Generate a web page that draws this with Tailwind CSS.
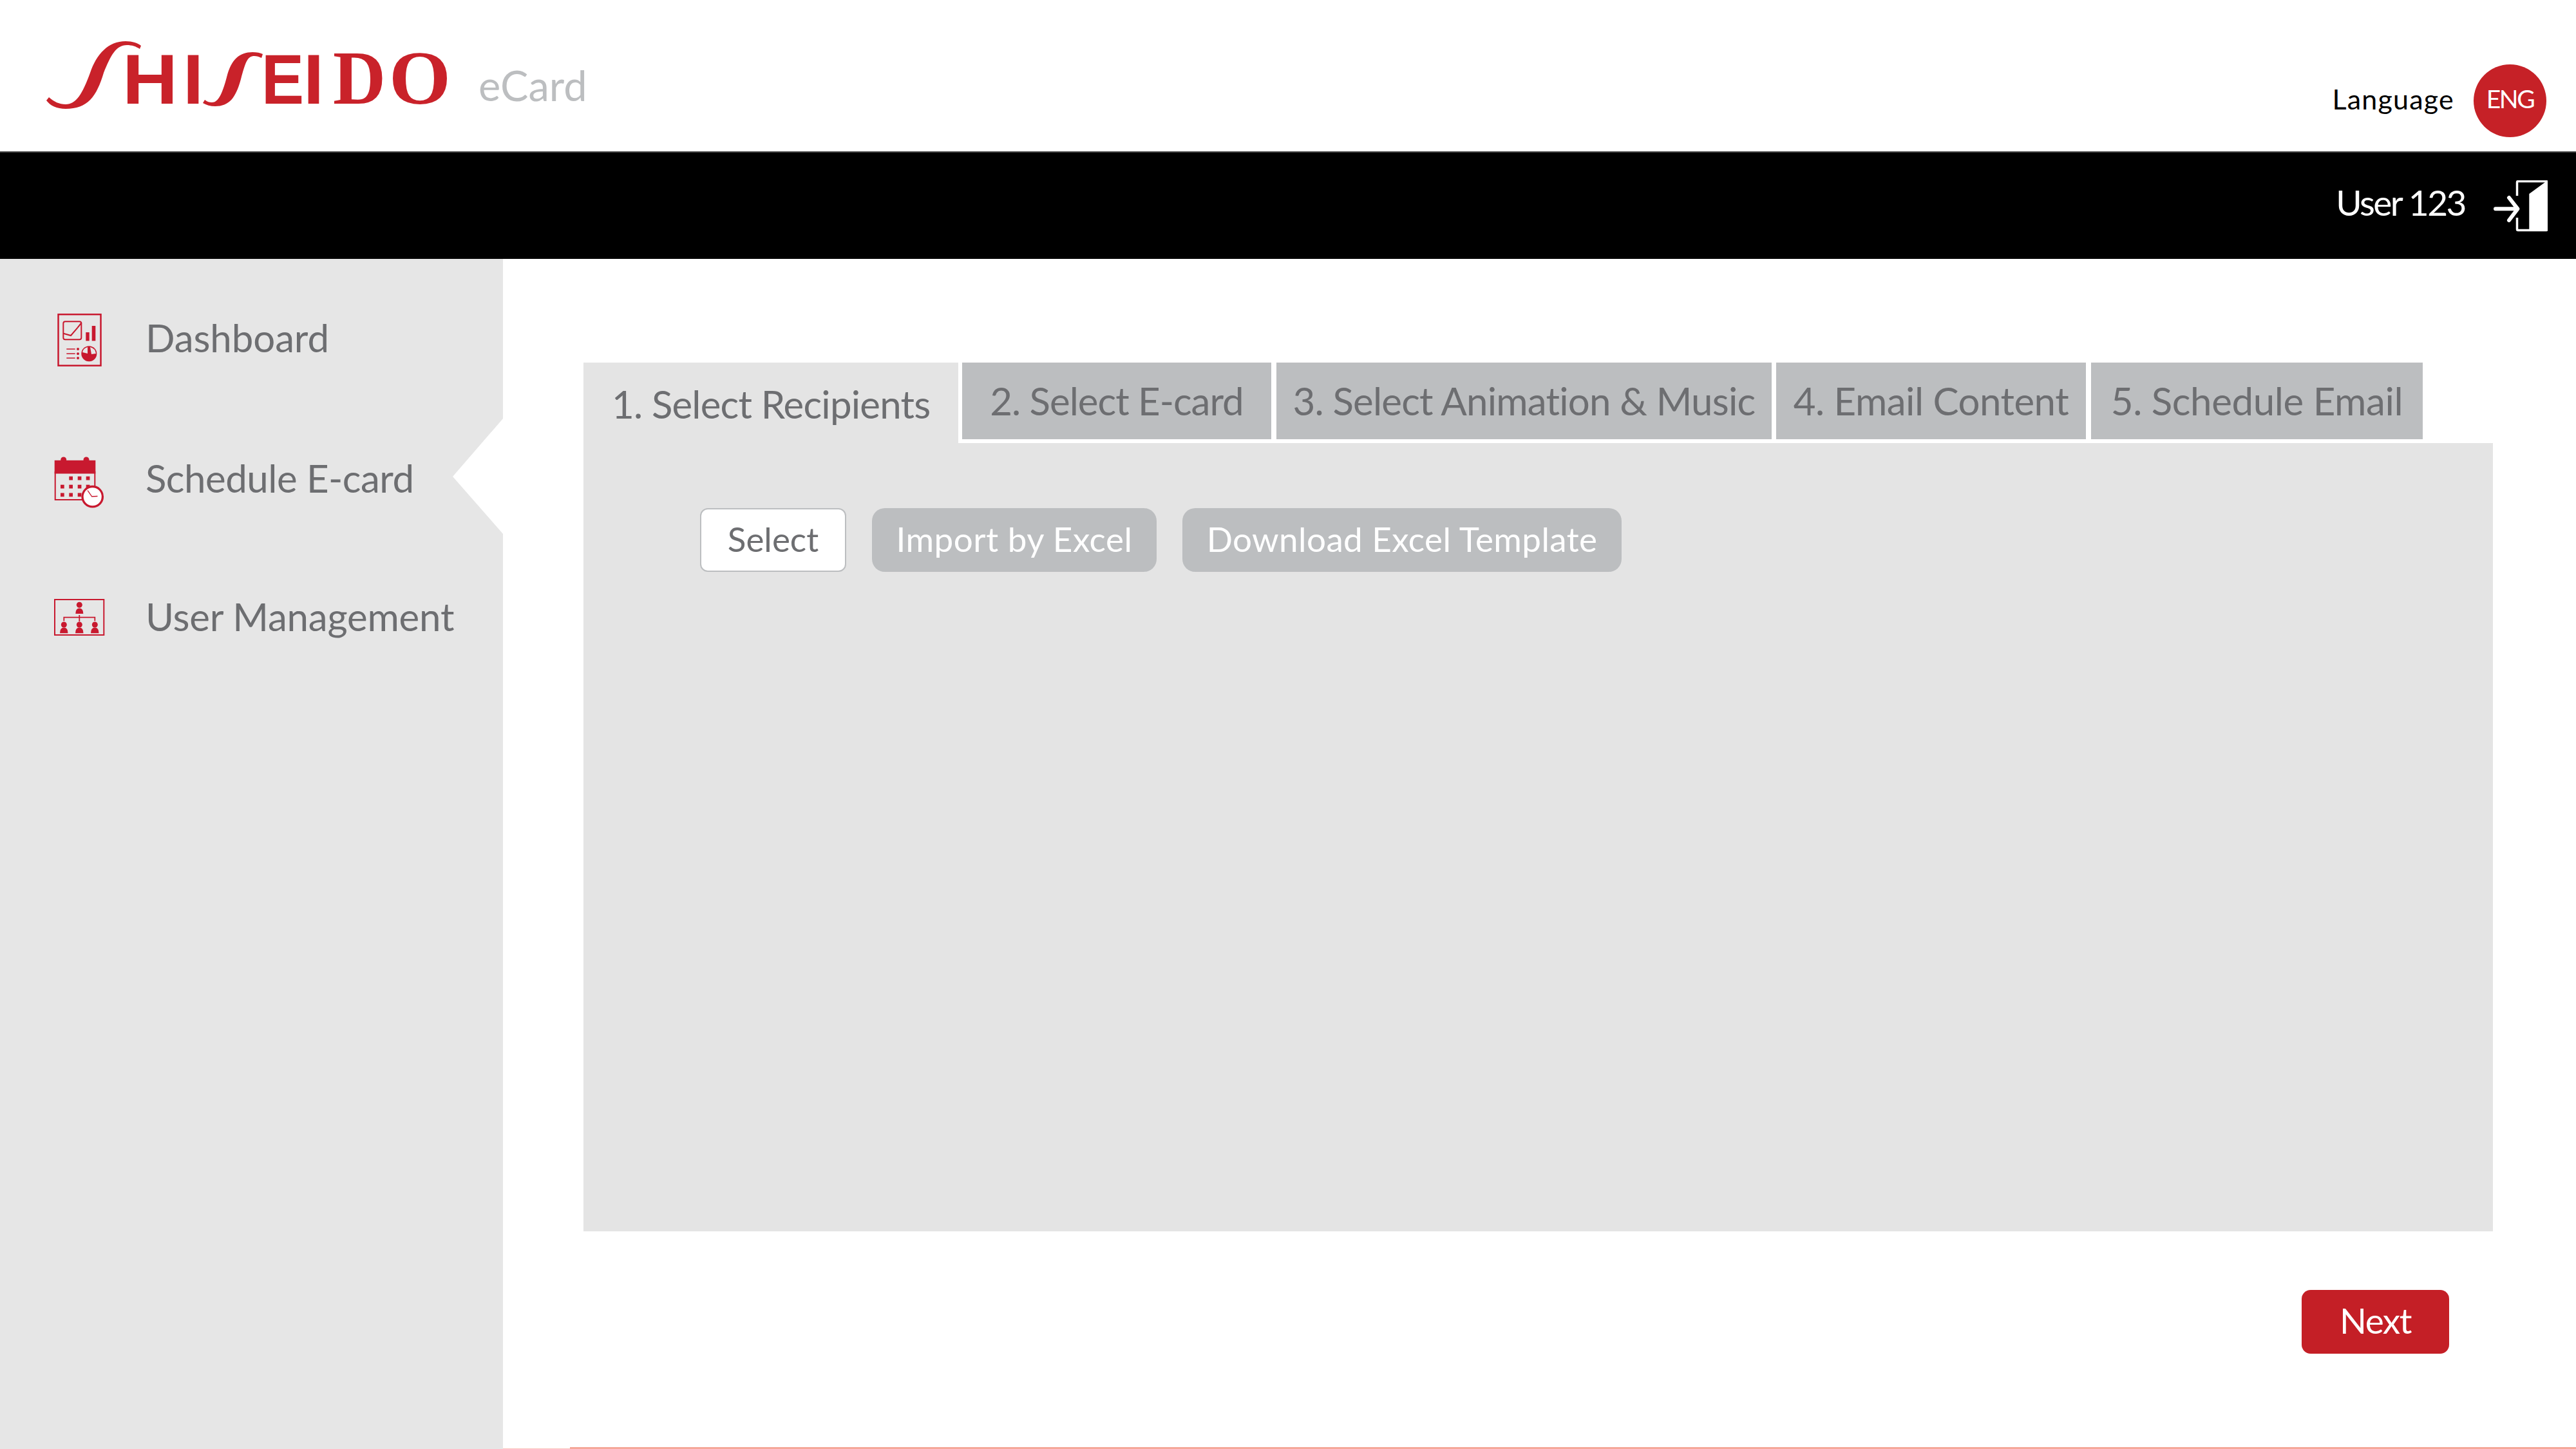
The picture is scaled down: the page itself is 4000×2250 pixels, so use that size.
<!DOCTYPE html>
<html lang="en">
	<head>
		<meta charset="UTF-8" />
		<meta name="viewport" content="width=device-width, initial-scale=1.0" />
		<script src="https://cdn.jsdelivr.net/npm/@tailwindcss/browser@4"></script>
		<title>Shiseido eCard</title>
	</head>
	<body class="w-[4000px] h-[2250px] bg-white overflow-hidden flex flex-col font-['Lato',sans-serif] text-[#6d6e71]">
		<!-- Logo + language -->
		<header class="h-[235px] shrink-0 flex justify-between">
			<div class="flex">
				<svg class="w-[720px] h-[235px]" viewBox="0 0 720 235" fill="#c9222a">
					<path d="M72 156 L76 151 C84 158 92 162 102 162 C118 162 128 146 140 113 C150 84 168 64 195 64 C206 64 214 67 219 71 L217 76 C211 72 205 70 197 70 C180 70 172 86 161 113 C150 150 136 169 102 169 C88 169 78 164 72 156 Z" />
					<path d="M315 160 L318 155 C322 158 325 159 329 159 C339 159 345 146 352 120 C359 92 372 81 392 81 C399 81 404 82 408 84 L406 90 C402 88 399 87 395 87 C384 87 381 97 374 123 C366 152 356 165 334 165 C327 165 320 163 315 160 Z" />
					<text y="161" font-family="Liberation Sans" font-weight="700" font-size="109" x="190" textLength="86" lengthAdjust="spacingAndGlyphs">H</text>
					<text y="161" font-family="Liberation Sans" font-weight="700" font-size="109" x="284" textLength="32" lengthAdjust="spacingAndGlyphs">I</text>
					<text y="161" font-family="Liberation Sans" font-weight="700" font-size="109" x="406" textLength="66" lengthAdjust="spacingAndGlyphs">E</text>
					<text y="161" font-family="Liberation Sans" font-weight="700" font-size="109" x="471" textLength="32" lengthAdjust="spacingAndGlyphs">I</text>
					<text y="161" font-family="Liberation Serif" font-weight="700" font-size="118" x="517" textLength="82" lengthAdjust="spacingAndGlyphs">D</text>
					<text y="161" font-family="Liberation Serif" font-weight="700" font-size="118" x="604" textLength="96" lengthAdjust="spacingAndGlyphs">O</text>
				</svg>
				<span class="ml-[23px] mt-[87px] text-[65px] leading-[90px] text-[#bcbec0]">eCard</span>
			</div>
			<div class="flex items-start pt-[100px] pr-[46px]">
				<span class="mr-[30px] mt-[22px] text-[43px] tracking-[1.200px] leading-[64px] text-black">Language</span>
				<span class="w-[113px] h-[113px] rounded-full bg-[#c62127] text-white text-[39px] tracking-[-2.500px] leading-[107px] text-center">ENG</span>
			</div>
		</header>

		<!-- User bar -->
		<div class="h-[167px] shrink-0 bg-black border-t-2 border-[#444] flex items-center justify-end pr-[44px]">
			<span class="text-[55px] tracking-[-2.500px] leading-[70px] text-white mr-[44px] mb-[11px]">User 123</span>
			<svg class="w-[84px] h-[80px]" viewBox="0 0 84 80" fill="none">
				<path d="M36.500 24 V3 Q36.500 1.500 38 1.500 H82 Q83 1.500 83 3 V76 Q83 77.500 82 77.500 H38 Q36.500 77.500 36.500 76 V58" stroke="#fff" stroke-width="3.500" />
				<path d="M55.300 21 L80 3 H83 V78 H55.300 Z" fill="#fff" />
				<path d="M3 44.300 H37 M24 27 L37.500 44.300 L24 62" stroke="#fff" stroke-width="6" stroke-linecap="round" stroke-linejoin="round" />
			</svg>
		</div>

		<div class="flex flex-1 min-h-0">
			<!-- Sidebar -->
			<nav class="relative w-[781px] shrink-0 bg-[#e6e6e6] pt-[18px] text-[60px]">
				<a class="flex items-center h-[215.500px]">
					<svg class="w-[80px] h-[100px] ml-[84px] mr-[62px]" viewBox="0 0 80 100" fill="#c8192f">
						<rect x="6.500" y="10.200" width="66" height="79.500" fill="none" stroke="#c8192f" stroke-width="2.500" />
						<rect x="14.300" y="21.300" width="28" height="28" rx="3" fill="none" stroke="#c8192f" stroke-width="2" />
						<path d="M14.300 39.700 L26 43 L36 31.300 L42.700 23" fill="none" stroke="#c8192f" stroke-width="2" />
						<rect x="49.300" y="38" width="5.400" height="13.300" />
						<rect x="58.700" y="28" width="5.600" height="23.300" />
						<path d="M19.300 64 H32.700 M19.300 71.300 H32.700 M19.300 78 H32.700" stroke="#c8192f" stroke-width="1.500" />
						<circle cx="37" cy="64" r="2" /><circle cx="37" cy="71.300" r="2" /><circle cx="37" cy="78" r="2" />
						<circle cx="54.300" cy="71.300" r="12" />
						<path d="M52 61 V71 L44 69 Q45 63 52 61 Z M56 61 L58 72 L65 71 Q64 63 56 61 Z" fill="#e6e6e6" />
					</svg>
					<span class="tracking-[-0.100px] mb-[7px]">Dashboard</span>
				</a>
				<a class="flex items-center h-[215.500px]">
					<svg class="w-[80px] h-[100px] ml-[84px] mr-[62px]" viewBox="0 0 80 100" fill="#c8192f">
						<circle cx="14.700" cy="21" r="4.500" /><circle cx="50" cy="21" r="4.500" />
						<rect x="0.700" y="21.800" width="63.600" height="20.700" />
						<rect x="1.700" y="40" width="61.600" height="43" fill="none" stroke="#c8192f" stroke-width="2" />
						<path d="M23.300 46.800 h5.700 v5.700 h-5.700 Z M36.700 46.800 h5.700 v5.700 h-5.700 Z M49.700 46.800 h5.700 v5.700 h-5.700 Z M10 59.800 h5.700 v5.700 h-5.700 Z M23.300 59.800 h5.700 v5.700 h-5.700 Z M36.700 59.800 h5.700 v5.700 h-5.700 Z M49.700 59.800 h5.700 v5.700 h-5.700 Z M10 72.500 h5.700 v5.700 h-5.700 Z M23.300 72.500 h5.700 v5.700 h-5.700 Z M36.700 72.500 h5.700 v5.700 h-5.700 Z" />
						<circle cx="59.700" cy="78.200" r="15.700" fill="#fff" stroke="#c8192f" stroke-width="3.300" />
						<path d="M52 68.500 L58.700 78 L67.500 77.500" fill="none" stroke="#c8192f" stroke-width="1.300" />
					</svg>
					<span class="tracking-[-0.500px] mb-[3px]">Schedule E-card</span>
				</a>
				<a class="flex items-center h-[215.500px]">
					<svg class="w-[80px] h-[100px] ml-[84px] mr-[62px]" viewBox="0 0 80 100" fill="#c8192f">
						<rect x="1" y="22" width="76.300" height="55" fill="none" stroke="#c8192f" stroke-width="2" />
						<path d="M15.300 55.300 V49.700 H63.300 V55.300 M39.300 46 V56" fill="none" stroke="#c8192f" stroke-width="1.800" />
						<circle cx="39.300" cy="30.300" r="4.500" />
						<path d="M33.300 44 Q33.300 35.500 39.300 35.500 Q45.300 35.500 45.300 44 Z" />
						<circle cx="15.300" cy="61" r="4.500" />
						<path d="M9 74.300 Q9 65.500 15.300 65.500 Q21.500 65.500 21.500 74.300 Z" />
						<circle cx="39.300" cy="61" r="4.500" />
						<path d="M33 74.300 Q33 65.500 39.300 65.500 Q45.500 65.500 45.500 74.300 Z" />
						<circle cx="63.300" cy="61" r="4.500" />
						<path d="M57 74.300 Q57 65.500 63.300 65.500 Q69.500 65.500 69.500 74.300 Z" />
					</svg>
					<span class="tracking-[-0.200px] mb-[3px]">User Management</span>
				</a>
				<!-- active item notch -->
				<svg class="absolute left-[703px] top-[248px] w-[78px] h-[179px]" viewBox="0 0 78 179"><path d="M78 0 L0 90 L78 179 Z" fill="#fff" /></svg>
			</nav>

			<main class="relative flex-1 pl-[125px] pr-[129px] pt-[161px]">
				<!-- Steps -->
				<div class="flex items-start h-[125px] text-[60px] whitespace-nowrap">
					<div class="w-[582px] h-[125px] bg-[#e4e4e4] pl-[44px] tracking-[-0.800px] leading-[128px]">1. Select Recipients</div>
					<div class="w-[480px] h-[119px] ml-[6px] bg-[#bcbec0] text-center tracking-[-1px] leading-[119px]">2. Select E-card</div>
					<div class="w-[769px] h-[119px] ml-[8px] bg-[#bcbec0] text-center tracking-[-0.800px] leading-[119px]">3. Select Animation &amp; Music</div>
					<div class="w-[481px] h-[119px] ml-[7px] bg-[#bcbec0] text-center tracking-[-0.500px] leading-[119px]">4. Email Content</div>
					<div class="w-[515px] h-[119px] ml-[8px] bg-[#bcbec0] text-center tracking-[-0.400px] leading-[119px]">5. Schedule Email</div>
				</div>
				<section class="h-[1224px] bg-[#e4e4e4] pl-[181px] pt-[101px]">
					<div class="flex gap-[40px] text-[53px] whitespace-nowrap">
						<button class="w-[227px] h-[99px] pb-[4px] rounded-[12px] bg-white border-2 border-[#bcbec0]">Select</button>
						<button class="w-[442px] h-[99px] pb-[4px] rounded-[20px] bg-[#bcbec0] text-white tracking-[0.500px]">Import by Excel</button>
						<button class="w-[682px] h-[99px] pb-[4px] rounded-[20px] bg-[#bcbec0] text-white tracking-[0.400px]">Download Excel Template</button>
					</div>
				</section>
				<div class="flex justify-end pr-[68px] mt-[91px]">
					<button class="w-[229px] h-[99px] pb-[5px] rounded-[14px] bg-[#c41f26] text-white text-[55px] tracking-[-1.500px]">Next</button>
				</div>
				<div class="absolute bottom-0 left-0 w-[104px] h-px bg-[#fbc4bd]"></div>
				<div class="absolute bottom-0 left-[104px] right-0 h-[3px] bg-[#f5a89a]"></div>
			</main>
		</div>
	</body>
</html>
